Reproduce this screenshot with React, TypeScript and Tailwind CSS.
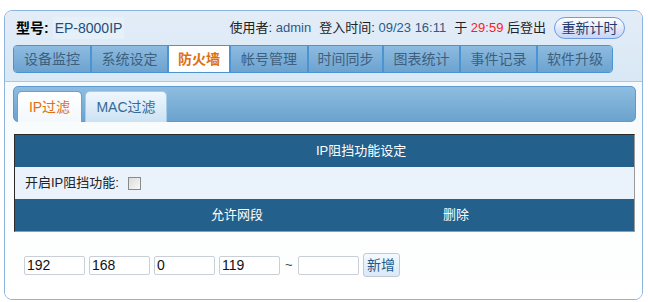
import React, { useState } from 'react';

const navTabs = [
  { label: '设备监控', w: 'w-[76px]' },
  { label: '系统设定', w: 'w-[77px]' },
  { label: '防火墙', w: 'w-[62px]' },
  { label: '帐号管理', w: 'w-[78px]' },
  { label: '时间同步', w: 'w-[75px]' },
  { label: '图表统计', w: 'w-[77px]' },
  { label: '事件记录', w: 'w-[77px]' },
  { label: '软件升级', w: 'w-[76px]' },
];

const ipParts = ['192', '168', '0', '119'];

const App: React.FC = () => {
  const [active] = useState('防火墙');
  const [subTab, setSubTab] = useState<'ip' | 'mac'>('ip');
  const [enabled, setEnabled] = useState(false);
  const [parts, setParts] = useState(ipParts);
  const [end, setEnd] = useState('');

  return (
    <div className="w-[648px] h-[302px] bg-white pt-[10px] pl-[4px] font-['Liberation_Sans','Noto_Sans_CJK_SC',sans-serif] text-[13px] text-[#222]">
      <div className="w-[639px] h-[290px] rounded-[8px] border border-[#8cb4dc] overflow-hidden flex flex-col">
        {/* header */}
        <div className="h-[71px] shrink-0 bg-gradient-to-b from-[#e3edf8] to-[#d9e8f5] border-b border-[#a8c8e6] px-[8px]">
          <div className="h-[34px] flex items-center">
            <span className="ml-[3px] font-bold text-[14px] text-black">型号:</span>
            <span className="ml-[4px] h-[22px] px-[2px] flex items-center bg-[#e6f0f9] text-[14px] text-[#1f4d7a]">EP-8000IP</span>
            <div className="ml-auto flex items-center">
              <span>使用者: <span className="text-[#2c5a86]">admin</span></span>
              <span className="ml-[8px]">登入时间: <span className="text-[#2c5a86]">09/23 16:11</span></span>
              <span className="ml-[8px]">于 <span className="text-[#ff1a1a]">29:59</span> 后登出</span>
              <button className="ml-[8px] w-[71px] h-[22px] rounded-full border border-[#6f9be2] bg-gradient-to-b from-white to-[#c6d5f6] text-[14px] text-[#1f3b6c] leading-none">
                重新计时
              </button>
              <span className="w-[9px]" />
            </div>
          </div>
          <div className="flex h-[28px] w-fit rounded-[4px] border border-[#4b93d3] overflow-hidden">
            {navTabs.map((t, i) => (
              <div
                key={t.label}
                className={`${t.w} flex items-center justify-center ${i > 0 ? 'border-l-2 border-[#4b93d3]' : ''} ${
                  t.label === active
                    ? 'bg-white text-[#e0700f] font-bold text-[14px]'
                    : 'bg-gradient-to-b from-[#8ebbe0] to-[#6ca3cf] text-[#3f5f7e] text-[14px]'
                }`}
              >
                {t.label}
              </div>
            ))}
          </div>
        </div>

        {/* body */}
        <div className="flex-1 bg-gradient-to-b from-[#f7fafc] to-white px-[8px] pt-[4px]">
          <div className="w-[623px] h-[36px] rounded-[5px] border border-[#5b9ad2] bg-gradient-to-b from-[#8fbde0] to-[#6aa3ce] flex items-end pl-[3px] gap-[3px]">
            <button
              onClick={() => setSubTab('ip')}
              className={`w-[65px] h-[31px] -mb-px rounded-t-[5px] border border-b-0 text-[14px] ${
                subTab === 'ip'
                  ? 'bg-gradient-to-b from-white to-[#f3f8fc] border-[#6aa0d2] text-[#e0700f]'
                  : 'bg-gradient-to-b from-[#f0f7fd] to-[#cbe2f4] border-[#a8cbe8] text-[#386894]'
              }`}
            >
              IP过滤
            </button>
            <button
              onClick={() => setSubTab('mac')}
              className={`w-[82px] h-[31px] -mb-px rounded-t-[5px] border border-b-0 text-[14px] ${
                subTab === 'mac'
                  ? 'bg-gradient-to-b from-white to-[#f3f8fc] border-[#6aa0d2] text-[#e0700f]'
                  : 'bg-gradient-to-b from-[#f0f7fd] to-[#cbe2f4] border-[#a8cbe8] text-[#386894]'
              }`}
            >
              MAC过滤
            </button>
          </div>

          <div className="mt-[12px] ml-[1px] w-[621px] border-t border-l border-t-[#2a2a2a] border-l-[#2a2a2a] border-r border-b border-r-[#9a9a9a] border-b-[#9a9a9a]">
            <div className="h-[32px] bg-[#23608c] text-white flex items-center pl-[301px]">IP阻挡功能设定</div>
            <div className="h-[32px] bg-[#eaf3fb] flex items-center pl-[10px]">
              开启IP阻挡功能:
              <input
                type="checkbox"
                checked={enabled}
                onChange={e => setEnabled(e.target.checked)}
                className="ml-[9px] w-[13px] h-[13px] appearance-none border border-[#8a8a8a] bg-gradient-to-br from-[#dcdcdc] to-[#f8f8f8] checked:bg-[#23608c]"
              />
            </div>
            <div className="h-[32px] bg-[#23608c] text-white flex items-center">
              <span className="pl-[196px] w-[428px]">允许网段</span>
              <span>删除</span>
            </div>
          </div>

          <div className="mt-[21px] ml-[11px] flex items-center">
            {parts.map((p, i) => (
              <input
                key={i}
                value={p}
                onChange={e => setParts(parts.map((x, j) => (j === i ? e.target.value : x)))}
                className="w-[61px] h-[19px] mr-[4px] border border-[#c9cfd6] rounded-[2px] bg-white px-[2px] text-[14px] text-[#111] outline-none"
              />
            ))}
            <span className="ml-[1px] mr-[5px] text-[#444]">~</span>
            <input
              value={end}
              onChange={e => setEnd(e.target.value)}
              className="w-[61px] h-[19px] border border-[#c9cfd6] rounded-[2px] bg-white px-[2px] text-[14px] outline-none"
            />
            <button className="ml-[4px] w-[37px] h-[24px] rounded-[3px] border border-[#c2c9d1] bg-gradient-to-b from-[#f4f9fe] to-[#d9e9f7] text-[14px] text-[#1d5a8a] leading-none">
              新增
            </button>
          </div>
        </div>
      </div>
    </div>
  );
};

export default App;
